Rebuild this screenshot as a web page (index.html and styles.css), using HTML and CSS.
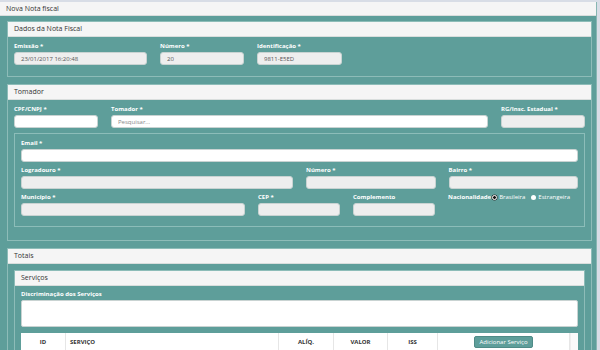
FILE: index.html
```html
<!DOCTYPE html>
<html lang="pt-BR">
<head>
  <meta charset="UTF-8">
  <meta name="viewport" content="width=device-width, initial-scale=1.0">
  <title>Nova Nota fiscal</title>
  <link rel="stylesheet" href="styles.css">
</head>
<body>
  <div class="panel main">
    <div class="panel-heading">Nova Nota fiscal</div>
    <div class="panel-body">

      <!-- Dados da nota -->
      <div class="panel">
        <div class="panel-heading">Dados da Nota Fiscal</div>
        <div class="panel-body">
          <div class="row row-dados">
            <div class="field">
              <label>Emissão *</label>
              <input type="text" value="23/01/2017 16:20:48" disabled>
            </div>
            <div class="field">
              <label>Número *</label>
              <input type="text" value="20" disabled>
            </div>
            <div class="field">
              <label>Identificação *</label>
              <input type="text" value="9811-E5ED" disabled>
            </div>
          </div>
        </div>
      </div>

      <!-- Tomador -->
      <div class="panel">
        <div class="panel-heading">Tomador</div>
        <div class="panel-body tomador">
          <div class="row row-tomador">
            <div class="field">
              <label>CPF/CNPJ *</label>
              <input type="text">
            </div>
            <div class="field">
              <label>Tomador *</label>
              <input type="text" placeholder="Pesquisar...">
            </div>
            <div class="field">
              <label>RG/Insc. Estadual *</label>
              <input type="text" disabled>
            </div>
          </div>

          <div class="box">
            <div class="field">
              <label>Email *</label>
              <input type="text">
            </div>
            <div class="row row-endereco">
              <div class="field">
                <label>Logradouro *</label>
                <input type="text" disabled>
              </div>
              <div class="field">
                <label>Número *</label>
                <input type="text" disabled>
              </div>
              <div class="field">
                <label>Bairro *</label>
                <input type="text" disabled>
              </div>
            </div>
            <div class="row row-cidade">
              <div class="field">
                <label>Município *</label>
                <input type="text" disabled>
              </div>
              <div class="field">
                <label>CEP *</label>
                <input type="text" disabled>
              </div>
              <div class="field">
                <label>Complemento</label>
                <input type="text" disabled>
              </div>
              <div class="nacionalidade">
                <label>Nacionalidade</label>
                <span class="radio checked"></span><span class="opt">Brasileira</span>
                <span class="radio"></span><span class="opt">Estrangeira</span>
              </div>
            </div>
          </div>
        </div>
      </div>

      <!-- Totais -->
      <div class="panel">
        <div class="panel-heading">Totais</div>
        <div class="panel-body totais">
          <div class="panel">
            <div class="panel-heading">Serviços</div>
            <div class="panel-body servicos">
              <div class="field">
                <label>Discriminação dos Serviços</label>
                <textarea></textarea>
              </div>
              <div class="tabela">
                <div class="th center">ID</div>
                <div class="th">SERVIÇO</div>
                <div class="th center">ALÍQ.</div>
                <div class="th center">VALOR</div>
                <div class="th center">ISS</div>
                <div class="th center"><button>Adicionar Serviço</button></div>
                <div class="scroll"></div>
              </div>
            </div>
          </div>
        </div>
      </div>

    </div>
  </div>
</body>
</html>
```

FILE: styles.css
```css
* {
  box-sizing: border-box;
  margin: 0;
  padding: 0;
}
html, body {
  height: 350px;
  overflow: hidden;
}
body {
  font-family: "Open Sans", Arial, sans-serif;
  background: #d8dde6;
  color: #333;
  padding-top: 2px;
}

/* paineis */
.panel {
  border: 1px solid #8dbcb8;
  background: #5e9e9a;
}
.panel-heading {
  background: #f5f5f5;
  border-bottom: 1px solid #d9dedd;
  font-size: 7px;
  height: 15px;
  line-height: 14px;
  padding-left: 6px;
}
.panel-body {
  padding: 5px 6px 11px 6px;
}
.panel-body > .panel + .panel {
  margin-top: 7px;
}

.main {
  width: 597px;
  border: none;
  border-right: 1px solid #87b6b2;
}
.main > .panel-heading {
  height: 14px;
  padding-left: 6px;
}
.main > .panel-body {
  padding: 5px 4px 6px 7px;
}

/* campos */
.row {
  display: grid;
  column-gap: 13px;
}
.row-dados { grid-template-columns: 133px 84px 85px; }
.row-tomador { grid-template-columns: 84px 1fr 84px; }
.row-endereco { grid-template-columns: 272px 1fr 1fr; }
.row-cidade { grid-template-columns: 224px 82px 82px 1fr; }

.field label,
.nacionalidade label {
  display: block;
  color: #fff;
  font-weight: bold;
  font-size: 6px;
  line-height: 9px;
  margin-bottom: 1px;
  white-space: nowrap;
}
input, textarea {
  display: block;
  width: 100%;
  height: 13px;
  border: 1px solid #c9d3d2;
  border-radius: 3px;
  background: #fff;
  font-family: inherit;
  font-size: 6px;
  color: #555;
  padding: 0 6px;
}
input:disabled {
  background: #eeeeee;
}
input::placeholder {
  color: #888;
}
textarea {
  height: 27px;
  border-radius: 2px;
  resize: none;
}

/* tomador */
.tomador {
  padding-bottom: 13px;
}
.box {
  margin-top: 5px;
  border: 1px solid #8cbdb9;
  padding: 5px 6px 10px 6px;
}
.box .row {
  margin-top: 4px;
}
.nacionalidade {
  display: flex;
  align-items: flex-start;
  white-space: nowrap;
}
.nacionalidade label {
  margin-right: 1px;
}
.radio {
  width: 5px;
  height: 5px;
  margin-top: 2px;
  border-radius: 50%;
  background: #fff;
  flex-shrink: 0;
}
.radio.checked {
  border: 1px solid #fff;
  background: #111;
  box-shadow: 0 0 0 0.5px #333;
}
.opt {
  color: #fff;
  font-size: 6px;
  line-height: 9px;
  margin: 0 6px 0 2px;
}

/* totais / servicos */
.totais {
  padding-top: 6px;
}
.servicos {
  padding: 4px 6px 0 6px;
  height: 80px;
}
.tabela {
  margin-top: 6px;
  background: #fff;
  display: grid;
  grid-template-columns: 45px 213px 55px 54px 50px 1fr 8px;
  height: 30px;
}
.th {
  font-size: 6px;
  font-weight: bold;
  color: #333;
  line-height: 19px;
  height: 19px;
  padding-left: 4px;
  border-right: 1px solid #e6e6e6;
  border-bottom: 1px solid #ddd;
}
.th.center {
  text-align: center;
  padding-left: 0;
}
button {
  font-family: inherit;
  font-size: 6px;
  color: #fff;
  background: #5e9e9a;
  border: 1px solid #4f8b87;
  border-radius: 2px;
  padding: 0 4px;
  height: 12px;
  line-height: 10px;
  vertical-align: middle;
  white-space: nowrap;
  min-width: 59px;
}
.scroll {
  border-left: 1px solid #eee;
  background: #fafafa;
}
```
